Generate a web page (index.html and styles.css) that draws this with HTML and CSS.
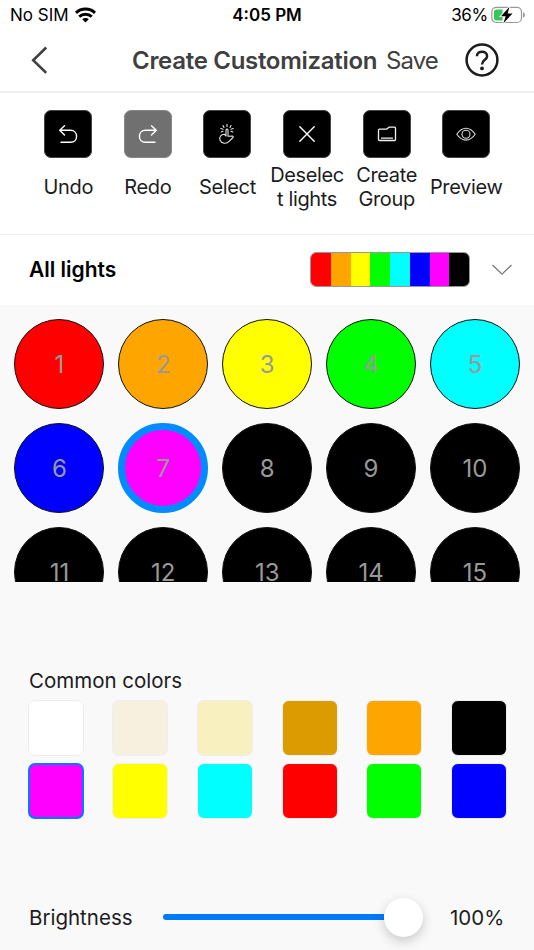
FILE: index.html
```html
<!DOCTYPE html>
<html lang="en">
<head>
  <meta charset="UTF-8">
  <meta name="viewport" content="width=device-width, initial-scale=1">
  <title>Create Customization</title>
  <link rel="stylesheet" href="styles.css">
</head>
<body>
  <div class="app">
    <!-- Status bar -->
    <div class="status-bar">
      <div class="carrier">
        <span>No SIM</span>
        <svg width="21" height="16" viewBox="0 0 21 16" fill="none" stroke="#000" stroke-width="3">
          <path d="M1 5.800C6.300 .8 14.700 .8 20 5.800"/>
          <path d="M4.200 9.700C7.800 6.500 13.200 6.500 16.800 9.700"/>
          <path d="M10.500 15.400L7.200 12.300C9.100 10.700 11.900 10.700 13.800 12.300Z" fill="#000" stroke="none"/>
        </svg>
      </div>
      <div class="clock">4:05 PM</div>
      <div class="battery">
        <span>36%</span>
        <svg width="35" height="18" viewBox="0 0 35 18">
          <rect x=".8" y="1.300" width="29.700" height="15.200" rx="4.500" fill="#fff" stroke="#999" stroke-width="1.200"/>
          <path d="M5.500 3.500H11.500V14.500H5.500Q3 14.500 3 12V6Q3 3.500 5.500 3.500Z" fill="#34c759"/>
          <path d="M32 6.200Q34 7 34 9T32 11.800Z" fill="#999"/>
          <path d="M18.500 .8L10 10.200H14.700L12.400 17.200L21.500 7.500H16.600Z" fill="#000" stroke="#fff" stroke-width="1.800" paint-order="stroke"/>
        </svg>
      </div>
    </div>

    <!-- Header -->
    <header class="header">
      <svg class="back" width="18" height="30" viewBox="0 0 18 30" fill="none" stroke="#404040" stroke-width="2.600">
        <path d="M15.200 2.500L2.200 15.200L15.200 27.900"/>
      </svg>
      <h1>Create Customization</h1>
      <span class="save">Save</span>
      <svg class="help" width="36" height="36" viewBox="0 0 36 36" fill="none" stroke="#1c1c1e" stroke-width="2.500">
        <circle cx="18" cy="18" r="15.400"/>
        <path d="M12.900 14.200C12.900 8.200 23.100 8.200 23.100 14.200C23.100 18 18 17.500 18 22.600"/>
        <circle cx="18" cy="26.400" r="1.900" fill="#1c1c1e" stroke="none"/>
      </svg>
    </header>

    <!-- Tools -->
    <div class="toolbar">
      <div class="tool">
        <div class="tool-icon">
          <svg width="24" height="24" viewBox="0 0 24 24" fill="none" stroke="#fff" stroke-width="1.400" stroke-linecap="round" stroke-linejoin="round">
            <path d="M8.500 3.700L3.700 8.300L8.500 13M4 8.300H14.500C22.600 8.300 22.600 20.300 14.500 20.300H5"/>
          </svg>
        </div>
        <div class="tool-label">Undo</div>
      </div>
      <div class="tool">
        <div class="tool-icon disabled">
          <svg width="24" height="24" viewBox="0 0 24 24" fill="none" stroke="#fff" stroke-width="1.400" stroke-linecap="round" stroke-linejoin="round">
            <path d="M15.500 3.700L20.300 8.300L15.500 13M20 8.300H9.500C1.400 8.300 1.400 20.300 9.500 20.300H19"/>
          </svg>
        </div>
        <div class="tool-label">Redo</div>
      </div>
      <div class="tool">
        <div class="tool-icon">
          <svg width="24" height="24" viewBox="0 0 24 24" fill="none" stroke="#e6e6e6" stroke-width="1.100" stroke-linecap="round" stroke-linejoin="round">
            <path d="M11 14V8.200C11 6.700 13 6.700 13 8.200V14.300L17.500 14.100C18.600 14.200 18.300 15.300 17.500 16L14.300 19.200C11.500 22.300 6.600 21.800 5 18.300C4 14.700 6 12.400 9.200 12.200L10.800 13.800"/>
            <path d="M12 2.300V4.500M8 3.500L9 5.500M16 3.500L15 5.500M5.800 6.600L8 7.300M18.200 6.600L16 7.300M6.200 10L8 9.300M17.800 10L16 9.300"/>
          </svg>
        </div>
        <div class="tool-label">Select</div>
      </div>
      <div class="tool">
        <div class="tool-icon">
          <svg width="24" height="24" viewBox="0 0 24 24" fill="none" stroke="#fff" stroke-width="1.400" stroke-linecap="round">
            <path d="M4.800 4.800L19.200 19.200M19.200 4.800L4.800 19.200"/>
          </svg>
        </div>
        <div class="tool-label">Deselec<br>t lights</div>
      </div>
      <div class="tool">
        <div class="tool-icon">
          <svg width="24" height="24" viewBox="0 0 24 24" fill="none" stroke="#f2f2f2" stroke-width="1.300" stroke-linecap="round" stroke-linejoin="round">
            <path d="M4.500 7.200H11.500L14 5.200H19.500Q20.500 5.200 20.500 6.200V17.500Q20.500 18.500 19.500 18.500H4.500Q3.500 18.500 3.500 17.500V8.200Q3.500 7.200 4.500 7.200ZM6.500 16.200H17.500"/>
          </svg>
        </div>
        <div class="tool-label">Create<br>Group</div>
      </div>
      <div class="tool">
        <div class="tool-icon">
          <svg width="24" height="24" viewBox="0 0 24 24" fill="none" stroke="#ddd" stroke-width="1.100">
            <path d="M2.800 12.200C8.300 4.300 15.700 4.300 21.200 12.200C15.700 20.100 8.300 20.100 2.800 12.200Z"/>
            <circle cx="12" cy="12.200" r="4"/>
          </svg>
        </div>
        <div class="tool-label">Preview</div>
      </div>
    </div>

    <!-- Selected group -->
    <div class="group-row">
      <h2>All lights</h2>
      <div class="strip">
        <span class="red"></span>
        <span class="orange"></span>
        <span class="yellow"></span>
        <span class="green"></span>
        <span class="cyan"></span>
        <span class="blue"></span>
        <span class="magenta"></span>
        <span class="black"></span>
      </div>
      <svg width="22" height="14" viewBox="0 0 22 14" fill="none" stroke="#777" stroke-width="1.300">
        <path d="M1.500 2L11 11.200L20.500 2"/>
      </svg>
    </div>

    <!-- Lights -->
    <div class="lights">
      <div class="light red">1</div>
      <div class="light orange">2</div>
      <div class="light yellow">3</div>
      <div class="light green">4</div>
      <div class="light cyan">5</div>
      <div class="light blue">6</div>
      <div class="light magenta active">7</div>
      <div class="light black">8</div>
      <div class="light black">9</div>
      <div class="light black">10</div>
      <div class="light black">11</div>
      <div class="light black">12</div>
      <div class="light black">13</div>
      <div class="light black">14</div>
      <div class="light black">15</div>
    </div>

    <!-- Common colors -->
    <div class="colors">
      <h3>Common colors</h3>
      <div class="swatches">
        <div class="swatch white"></div>
        <div class="swatch cream"></div>
        <div class="swatch pale-yellow"></div>
        <div class="swatch gold"></div>
        <div class="swatch orange"></div>
        <div class="swatch black"></div>
        <div class="swatch magenta active"></div>
        <div class="swatch yellow"></div>
        <div class="swatch cyan"></div>
        <div class="swatch red"></div>
        <div class="swatch green"></div>
        <div class="swatch blue"></div>
      </div>
    </div>

    <!-- Brightness -->
    <div class="brightness">
      <span class="brightness-label">Brightness</span>
      <div class="slider">
        <div class="track"></div>
        <div class="thumb"></div>
      </div>
      <span class="brightness-value">100%</span>
    </div>
  </div>
</body>
</html>
```
FILE: styles.css
```css
:root {
  --bg: #f9f9f9;
  --accent: #007aff;
  --text: #1c1c1e;
}

* {
  box-sizing: border-box;
}

body {
  font-family: Inter, "Liberation Sans", sans-serif;
  background: var(--bg);
  color: var(--text);
  margin: 0;
}

h1, h2, h3 {
  margin: 0;
}

svg {
  display: block;
  flex: none;
}

.app {
  width: 534px;
  height: 950px;
  overflow: hidden;
}

/* Status bar */
.status-bar {
  display: grid;
  grid-template-columns: 1fr auto 1fr;
  align-items: center;
  height: 30px;
  padding: 0 8px 0 10px;
  background: #fff;
  color: #000;
  font-size: 17px;
}

.carrier, .battery {
  display: flex;
  align-items: center;
  gap: 6px;
}

.battery {
  justify-content: flex-end;
  gap: 3px;
  letter-spacing: -0.3px;
}

.clock {
  font-weight: 600;
  margin-right: 2px;
}

/* Header */
.header {
  display: flex;
  align-items: center;
  height: 63px;
  padding: 0 34px 1px 31px;
  background: #fff;
  border-bottom: 2px solid #eee;
  color: #404040;
  font-size: 24px;
}

.header h1 {
  margin-left: 83px;
  width: 245px;
  font-size: 24px;
  font-weight: 600;
  letter-spacing: -0.3px;
  white-space: nowrap;
}

.save {
  width: 52px;
  margin-left: 9px;
  letter-spacing: -0.9px;
}

.help {
  margin-left: auto;
}

/* Tools */
.toolbar {
  display: flex;
  height: 142px;
  padding: 17px 28px 0 28.500px;
  background: #fff;
  border-bottom: 1px solid #eee;
}

.tool {
  display: flex;
  flex: 1;
  flex-direction: column;
  align-items: center;
}

.tool-icon {
  display: flex;
  align-items: center;
  justify-content: center;
  width: 48px;
  height: 48px;
  background: #000;
  border: 1px solid #444;
  border-radius: 7px;
}

.tool-icon.disabled {
  background: #707070;
  border-color: #888;
}

.tool-label {
  display: flex;
  align-items: center;
  height: 59px;
  font-size: 20px;
  letter-spacing: -0.35px;
  line-height: 23.500px;
  text-align: center;
  white-space: nowrap;
}

/* Selected group */
.group-row {
  display: flex;
  align-items: center;
  height: 70px;
  padding: 0 21px 1px 29px;
  background: #fff;
}

.group-row h2 {
  color: #000;
  font-size: 21px;
  font-weight: 600;
}

.strip {
  display: flex;
  width: 160px;
  height: 35px;
  margin: 0 21px 0 auto;
  border: 1px solid #999;
  border-radius: 6px;
  overflow: hidden;
}

.strip span {
  flex: 1;
}

/* Lights */
.lights {
  display: grid;
  grid-template-columns: repeat(5, 90px);
  grid-auto-rows: 90px;
  gap: 14px 13.900px;
  height: 277px;
  padding: 14px 14px 0 14.400px;
  overflow: hidden;
}

.light {
  display: flex;
  align-items: center;
  justify-content: center;
  border: 1.500px solid #111;
  border-radius: 50%;
  color: #999;
  font-size: 24px;
}

.light.active {
  border: 7px solid #008cff;
}

/* Common colors */
.colors {
  padding: 84px 27px 0 27.500px;
}

.colors h3 {
  font-size: 20.500px;
  font-weight: 400;
  line-height: 26px;
  padding: 2px 2px 6px 1.500px;
}

.swatches {
  display: grid;
  grid-template-columns: repeat(6, 56px);
  justify-content: space-between;
  row-gap: 7px;
}

.swatch {
  height: 56px;
  border: 1px solid #eee;
  border-radius: 7px;
}

.swatch.active {
  border: 2px solid var(--accent);
}

/* Brightness */
.brightness {
  display: flex;
  align-items: center;
  height: 60px;
  margin-top: 68px;
  padding: 0 29px;
  font-size: 20.500px;
}

.brightness-label {
  width: 134px;
}

.slider {
  display: flex;
  align-items: center;
  width: 260px;
}

.track {
  flex: 1;
  height: 6px;
  border-radius: 3px 0 0 3px;
  background: var(--accent);
}

.thumb {
  width: 39px;
  height: 39px;
  border-radius: 50%;
  background: #fff;
  box-shadow: 0 4px 12px rgba(0, 0, 0, 0.2);
}

.brightness-value {
  margin-left: 27px;
}

/* Light colors */
.white { background: #fff; }
.cream { background: #f7f0df; }
.pale-yellow { background: #f8f0be; }
.gold { background: #dc9b00; }
.orange { background: #ffa500; }
.black { background: #000; }
.magenta { background: #f0f; }
.yellow { background: #ff0; }
.cyan { background: #0ff; }
.red { background: #f00; }
.green { background: #0f0; }
.blue { background: #00f; }
```
